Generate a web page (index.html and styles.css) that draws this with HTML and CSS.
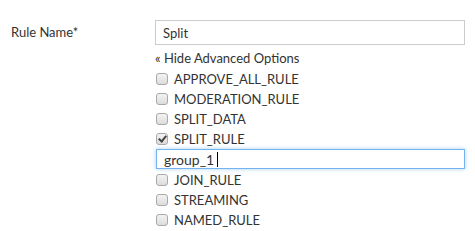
FILE: index.html
```html
<!DOCTYPE html>
<html lang="en">

<head>
    <meta charset="UTF-8">
    <title>Rule Editor</title>
    <link rel="stylesheet" href="styles.css">
</head>

<body>
    <div class="form-row">
        <label class="field-label" for="rule-name">Rule Name*</label>
        <div class="field">
            <input id="rule-name" class="text-input" type="text" value="Split">
            <a class="toggle-link" href="#">« Hide Advanced Options</a>
            <div class="options">
                <label class="option"><input type="checkbox" class="check"> APPROVE_ALL_RULE</label>
                <label class="option"><input type="checkbox" class="check"> MODERATION_RULE</label>
                <label class="option"><input type="checkbox" class="check"> SPLIT_DATA</label>
                <label class="option"><input type="checkbox" class="check" checked> SPLIT_RULE</label>
                <div class="sub-field">
                    <input class="text-input small focused" type="text" value="group_1">
                    <span class="caret"></span>
                </div>
                <label class="option"><input type="checkbox" class="check"> JOIN_RULE</label>
                <label class="option"><input type="checkbox" class="check"> STREAMING</label>
                <label class="option"><input type="checkbox" class="check"> NAMED_RULE</label>
            </div>
        </div>
    </div>
</body>

</html>
```

FILE: styles.css
```css
body {
    margin: 0;
    background: #ffffff;
    color: #333333;
    font-family: Lato, 'Open Sans', sans-serif;
    font-size: 13px;
}

.form-row {
    display: grid;
    grid-template-columns: 155px 310px;
    padding-top: 20px;
}

.field-label {
    padding-left: 11px;
    line-height: 25px;
}

.field {
    display: flex;
    flex-direction: column;
}

.text-input {
    box-sizing: border-box;
    width: 310px;
    height: 25px;
    border: 1px solid #cccccc;
    padding: 0 7px;
    font-family: inherit;
    font-size: 13px;
    color: #333333;
    outline: none;
}

.toggle-link {
    margin-top: 3px;
    line-height: 20px;
    color: #333333;
    text-decoration: none;
}

.options {
    display: flex;
    flex-direction: column;
    padding-top: 1px;
}

.option {
    display: flex;
    align-items: center;
    gap: 5px;
    height: 20px;
    padding-left: 1px;
}

.check {
    appearance: none;
    -webkit-appearance: none;
    box-sizing: border-box;
    width: 12px;
    height: 12px;
    margin: 0 1px 0 0;
    border: 1px solid #a9a9a9;
    border-radius: 3px;
    background: linear-gradient(#f3f3f3, #dcdcdc);
    position: relative;
}

.check:checked::after {
    content: "";
    position: absolute;
    left: 3px;
    top: 0px;
    width: 3px;
    height: 6px;
    border: solid #444444;
    border-width: 0 2px 2px 0;
    transform: rotate(40deg);
}

.sub-field {
    position: relative;
    padding-left: 1px;
    margin-bottom: 1px;
}

.text-input.small {
    width: 309px;
    height: 20px;
    font-size: 14px;
}

.text-input.focused {
    border-color: #75b3f0;
    box-shadow: 0 0 4px rgba(102, 175, 233, 0.6);
}

.caret {
    position: absolute;
    left: 62px;
    top: 3px;
    width: 1px;
    height: 15px;
    background: #000000;
}
```
